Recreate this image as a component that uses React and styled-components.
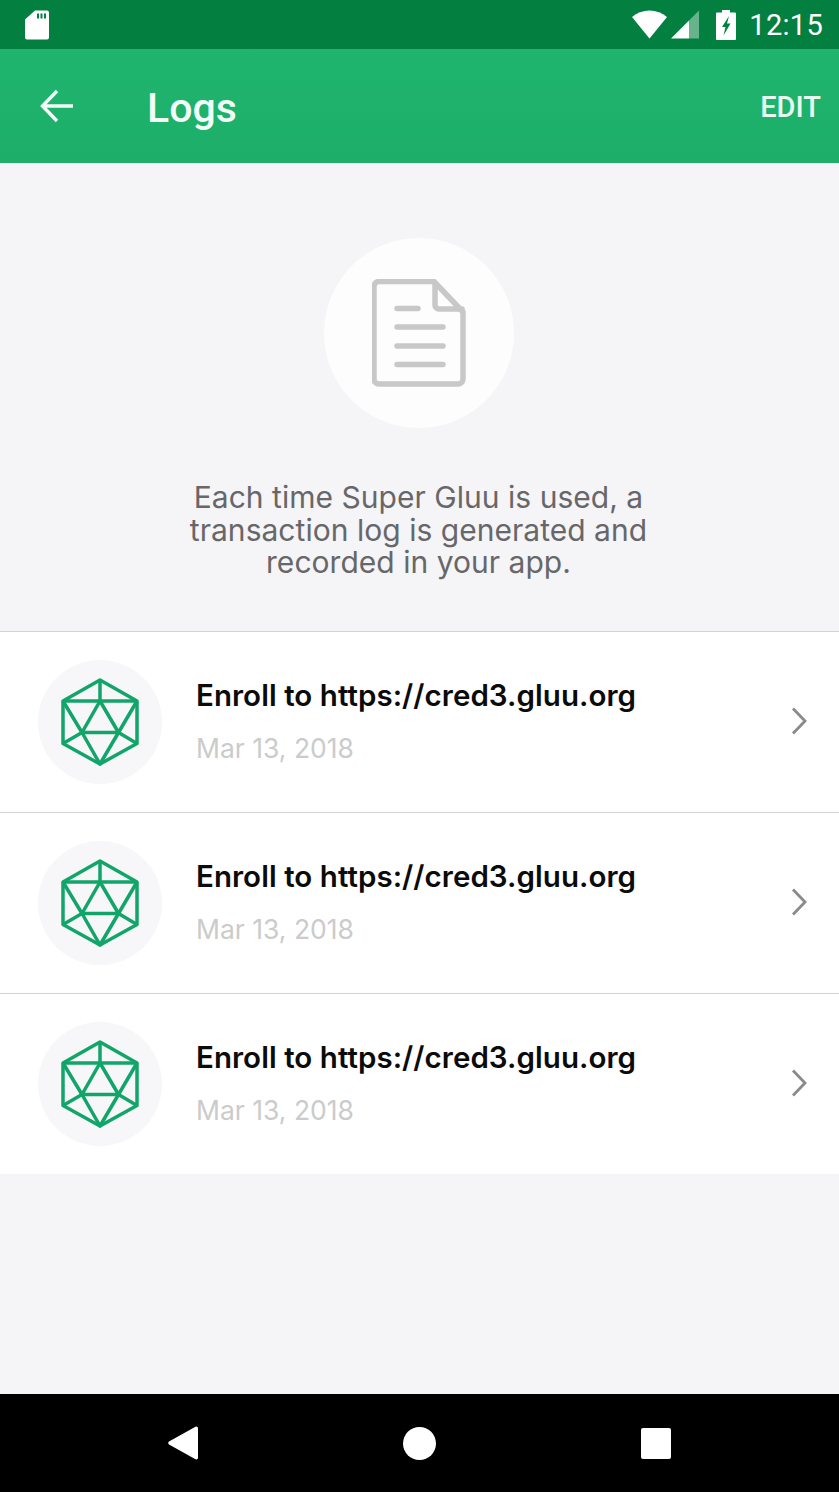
import styled, { createGlobalStyle } from 'styled-components';

const GlobalStyle = createGlobalStyle`
  html, body {
    margin: 0;
    padding: 0;
    background: #f5f4f7;
  }
`;

const Screen = styled.div`
  width: 839px;
  height: 1492px;
  display: flex;
  flex-direction: column;
  overflow: hidden;
  background: #f5f4f7;
`;

const StatusBar = styled.div`
  height: 49px;
  flex: none;
  display: flex;
  align-items: center;
  padding: 0 16px 0 25px;
  background: #03803f;
`;

const StatusRight = styled.div`
  margin-left: auto;
  display: flex;
  align-items: center;
  gap: 4px;
`;

const BatterySlot = styled.span`
  display: flex;
  margin: 0 9px 0 12px;
`;

const Clock = styled.span`
  padding-top: 2px;
  font: 400 29px/1 Roboto, sans-serif;
  letter-spacing: 0.3px;
  color: #fff;
`;

const Toolbar = styled.div`
  height: 114px;
  flex: none;
  display: flex;
  align-items: center;
  padding: 0 18px 0 40px;
  background: linear-gradient(#1fb56e, #1dae6a);
`;

const Title = styled.h1`
  margin: 4px 0 0 73px;
  font: 500 41px/1 Roboto, sans-serif;
  color: #f4fcf8;
`;

const EditButton = styled.span`
  margin: 2px 0 0 auto;
  font: 500 29px/1 Roboto, sans-serif;
  color: #e9f8f0;
`;

const Intro = styled.div`
  height: 468px;
  flex: none;
  box-sizing: border-box;
  padding: 75px 2px 0 0;
  display: flex;
  flex-direction: column;
  align-items: center;
`;

const DocCircle = styled.div`
  width: 190px;
  height: 190px;
  border-radius: 50%;
  background: #fdfdfd;
  display: flex;
  align-items: center;
  justify-content: center;
`;

const IntroText = styled.p`
  width: 520px;
  margin: 53px 0 0;
  text-align: center;
  font: 400 30px/32.5px Inter, sans-serif;
  letter-spacing: 0.03px;
  color: #676769;
`;

const LogList = styled.div`
  flex: none;
  border-top: 1px solid #d3d3d3;
  background: #fff;
`;

const LogRow = styled.div`
  height: 180px;
  display: flex;
  align-items: center;
  padding: 0 32px 0 38px;
  border-top: ${(p) => (p.$first ? 'none' : '1px solid #d3d3d3')};
`;

const IconCircle = styled.div`
  width: 124px;
  height: 124px;
  flex: none;
  border-radius: 50%;
  background: #f7f6f8;
  display: flex;
  align-items: center;
  justify-content: center;
`;

const LogText = styled.div`
  margin: -1px 0 0 34px;
  flex: 1;
`;

const LogTitle = styled.div`
  font: 600 29.5px/36px Inter, sans-serif;
  letter-spacing: 0.05px;
  color: #0b0b0b;
`;

const LogDate = styled.div`
  margin-top: 17px;
  font: 400 26.5px/36px Inter, sans-serif;
  color: #cbcbcb;
`;

const ChevronSlot = styled.span`
  display: flex;
  margin-top: -2px;
`;

const Spacer = styled.div`
  flex: 1;
`;

const NavBar = styled.div`
  height: 98px;
  flex: none;
  display: flex;
  align-items: center;
  justify-content: space-between;
  padding: 0 168px 0 168px;
  background: #000;
`;

const SdCard = () => (
  <svg width="24" height="30" viewBox="0 0 24 30">
    <path d="M10 0.500h12a2 2 0 0 1 2 2v25a2 2 0 0 1-2 2H2a2 2 0 0 1-2-2V9.500z" fill="#fff" />
    <path d="M12 3.500h2v5h-2zM15.500 3.500h2v5h-2zM19 3.500h2v5h-2z" fill="#03803f" />
  </svg>
);

const Wifi = () => (
  <svg width="35" height="29" viewBox="0 0 35 29">
    <path d="M0 7C5 2.800 11 0.500 17.500 0.500S30 2.800 35 7L17.500 28.500z" fill="#fff" />
  </svg>
);

const Signal = () => (
  <svg width="29" height="29" viewBox="0 0 29 29">
    <path d="M28 0.500V28.500H18V10.500z" fill="#fff" fillOpacity="0.4" />
    <path d="M18 10.500V28.500H0z" fill="#fff" />
  </svg>
);

const Battery = () => (
  <svg width="20" height="30" viewBox="0 0 20 30">
    <path d="M6 0h8v2.500h5a1 1 0 0 1 1 1V29a1 1 0 0 1-1 1H1a1 1 0 0 1-1-1V3.500a1 1 0 0 1 1-1h5z" fill="#fff" />
    <path d="M13 6L6 17h3.500L7.500 25.500 14.500 13.500h-3.500z" fill="#03803f" />
  </svg>
);

const BackArrow = () => (
  <svg width="34" height="34" viewBox="0 0 34 34" fill="none" stroke="#f4fcf8" strokeWidth="3.400">
    <path d="M33 17H3M17 2L2.500 17 17 32" />
  </svg>
);

const DocIcon = () => (
  <svg width="94" height="108" viewBox="0 0 94 108" fill="none" stroke="#c8c8c8" strokeLinecap="round" strokeLinejoin="round">
    <path d="M7 2.500H62L91 33V100a5 5 0 0 1-5 5H7a5 5 0 0 1-5-5V7.500a5 5 0 0 1 5-5z" strokeWidth="5.500" />
    <path d="M63 4V26a4 4 0 0 0 4 4H90" strokeWidth="5.500" />
    <path d="M25 29.500H46M25 48H71M25 67H71M25 85.500H71" strokeWidth="5.500" />
  </svg>
);

const Gem = () => (
  <svg width="78" height="88" viewBox="0 0 78 88" fill="none" stroke="#12a56a" strokeWidth="3.500" strokeLinejoin="round">
    <path d="M39 2L76 23V65.500L39 86L2 65.500V23z" />
    <path d="M2 23H76M39 2V23" />
    <path d="M39 23L21 54.500H57.500z" />
    <path d="M2 23L21 54.500L39 86L57.500 54.500L76 23" />
    <path d="M2 65.500L21 54.500M76 65.500L57.500 54.500" />
  </svg>
);

const Chevron = () => (
  <svg width="16" height="28" viewBox="0 0 16 28" fill="none" stroke="#8a8a8a" strokeWidth="2.800">
    <path d="M2 1.500L14 14 2 26.500" />
  </svg>
);

const NavBack = () => (
  <svg width="30" height="34" viewBox="0 0 30 34">
    <path d="M27 1a1.800 1.800 0 0 1 3 1.500v29a1.800 1.800 0 0 1-3 1.500L1 18.500a1.800 1.800 0 0 1 0-3z" fill="#fff" />
  </svg>
);

const NavHome = styled.div`
  width: 33px;
  height: 33px;
  border-radius: 50%;
  background: #fff;
`;

const NavSquare = styled.div`
  width: 30px;
  height: 31px;
  border-radius: 2px;
  background: #fff;
`;

const logs = [1, 2, 3];

const App = () => (
  <Screen>
    <GlobalStyle />
    <StatusBar>
      <SdCard />
      <StatusRight>
        <Wifi />
        <Signal />
        <BatterySlot>
          <Battery />
        </BatterySlot>
        <Clock>12:15</Clock>
      </StatusRight>
    </StatusBar>
    <Toolbar>
      <BackArrow />
      <Title>Logs</Title>
      <EditButton>EDIT</EditButton>
    </Toolbar>
    <Intro>
      <DocCircle>
        <DocIcon />
      </DocCircle>
      <IntroText>
        Each time Super Gluu is used, a transaction log is generated and recorded in your app.
      </IntroText>
    </Intro>
    <LogList>
      {logs.map((id, index) => (
        <LogRow key={id} $first={index === 0}>
          <IconCircle>
            <Gem />
          </IconCircle>
          <LogText>
            <LogTitle>Enroll to https://cred3.gluu.org</LogTitle>
            <LogDate>Mar 13, 2018</LogDate>
          </LogText>
          <ChevronSlot>
            <Chevron />
          </ChevronSlot>
        </LogRow>
      ))}
    </LogList>
    <Spacer />
    <NavBar>
      <NavBack />
      <NavHome />
      <NavSquare />
    </NavBar>
  </Screen>
);

export default App;
